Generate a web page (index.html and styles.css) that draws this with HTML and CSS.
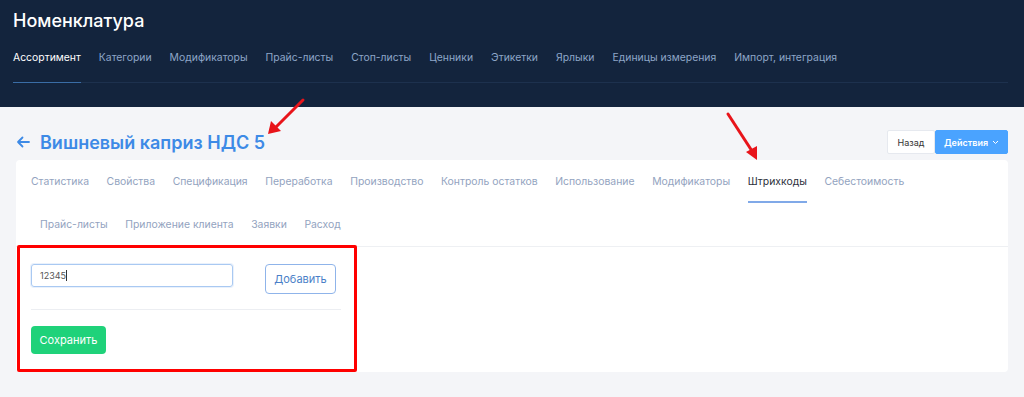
FILE: index.html
```html
<!DOCTYPE html>
<html lang="ru">
<head>
    <meta charset="UTF-8">
    <meta name="viewport" content="width=device-width, initial-scale=1.0">
    <title>Номенклатура</title>
    <link rel="stylesheet" href="styles.css">
</head>
<body>
    <header class="top">
        <h1 class="top-title">Номенклатура</h1>
        <nav class="top-nav">
            <a class="top-link active">Ассортимент</a>
            <a class="top-link">Категории</a>
            <a class="top-link">Модификаторы</a>
            <a class="top-link">Прайс-листы</a>
            <a class="top-link">Стоп-листы</a>
            <a class="top-link">Ценники</a>
            <a class="top-link">Этикетки</a>
            <a class="top-link">Ярлыки</a>
            <a class="top-link">Единицы измерения</a>
            <a class="top-link">Импорт, интеграция</a>
        </nav>
    </header>

    <main class="page">
        <div class="page-head">
            <h2 class="item-title">
                <svg class="back" width="14" height="12" viewBox="0 0 14 12">
                    <path d="M13 6H2M6.5 1.5L2 6l4.5 4.5" fill="none" stroke="#3d8ae6" stroke-width="1.8" stroke-linecap="round" stroke-linejoin="round"/>
                </svg>
                Вишневый каприз НДС 5
            </h2>
            <div class="head-actions">
                <button class="btn-back">Назад</button>
                <button class="btn-actions">Действия
                    <svg width="7" height="5" viewBox="0 0 7 5"><path d="M1 1l2.5 2.5L6 1" fill="none" stroke="#fff" stroke-width="1"/></svg>
                </button>
            </div>
        </div>

        <section class="card">
            <div class="tabs">
                <div class="tab-row">
                    <a class="tab">Статистика</a>
                    <a class="tab">Свойства</a>
                    <a class="tab">Спецификация</a>
                    <a class="tab">Переработка</a>
                    <a class="tab">Производство</a>
                    <a class="tab">Контроль остатков</a>
                    <a class="tab">Использование</a>
                    <a class="tab">Модификаторы</a>
                    <a class="tab active">Штрихкоды</a>
                    <a class="tab">Себестоимость</a>
                </div>
                <div class="tab-row second">
                    <a class="tab">Прайс-листы</a>
                    <a class="tab">Приложение клиента</a>
                    <a class="tab">Заявки</a>
                    <a class="tab">Расход</a>
                </div>
            </div>

            <div class="tab-body">
                <div class="barcode-row">
                    <div class="code-input">12345<span class="caret"></span></div>
                    <button class="btn-add">Добавить</button>
                </div>
                <div class="divider"></div>
                <button class="btn-save">Сохранить</button>
            </div>

            <div class="highlight"></div>
        </section>
    </main>

    <svg class="arrows" width="1024" height="397" viewBox="0 0 1024 397">
        <line x1="303" y1="100" x2="276" y2="127" stroke="#e8141a" stroke-width="3" stroke-linecap="round"/>
        <polygon points="268,134 271,121 281,131" fill="#e8141a"/>
        <line x1="728" y1="114" x2="752" y2="151" stroke="#e8141a" stroke-width="3" stroke-linecap="round"/>
        <polygon points="757,160 746,152 757,146" fill="#e8141a"/>
    </svg>
</body>
</html>
```

FILE: styles.css
```css
body {
    margin: 0;
    font-family: Inter, "Noto Sans", sans-serif;
    background-color: #f4f5f8;
    color: #333;
    position: relative;
}

.top {
    background-color: #13243d;
    height: 107px;
    padding: 0 16px 0 13px;
    box-sizing: border-box;
}
.top-title {
    margin: 0;
    padding-top: 9px;
    font-size: 18px;
    font-weight: 500;
    color: #fff;
    line-height: 24px;
}
.top-nav {
    display: flex;
    gap: 18px;
    margin-top: 10px;
    border-bottom: 1px solid #1d314e;
}
.top-link {
    font-size: 10.4px;
    color: #8ea6c8;
    line-height: 14px;
    padding: 8px 0 17px;
    border-bottom: 1px solid transparent;
    margin-bottom: -1px;
}
.top-link.active {
    color: #fff;
    border-bottom-color: #3a6da6;
}

.page {
    padding: 0 16px;
    position: relative;
}
.page-head {
    display: flex;
    justify-content: space-between;
    align-items: center;
    height: 53px;
}
.item-title {
    margin: 0;
    display: flex;
    align-items: center;
    gap: 10px;
    font-size: 18px;
    font-weight: 600;
    color: #3d8ae6;
    padding-top: 17px;
}
.head-actions {
    display: flex;
    padding-top: 17px;
}
.head-actions button {
    font-family: inherit;
    font-size: 9px;
    height: 24px;
    border-radius: 2px;
    cursor: pointer;
}
.btn-back {
    background: #fff;
    border: 1px solid #e6e9ef;
    color: #333;
    width: 48px;
    border-radius: 2px 0 0 2px;
}
.btn-actions {
    background: #4aa3ff;
    border: 1px solid #4aa3ff;
    color: #fff;
    font-weight: 600;
    width: 73px;
    display: flex;
    align-items: center;
    justify-content: center;
    gap: 4px;
}

.card {
    background: #fff;
    border-radius: 4px;
    position: relative;
}
.tab-row {
    display: flex;
    gap: 17.6px;
    padding-left: 15px;
}
.tab-row.second {
    padding-left: 24px;
}
.tab {
    font-size: 10.4px;
    color: #93a3c0;
    line-height: 14px;
    height: 14px;
    padding: 15px 0 12px;
    border-bottom: 2px solid transparent;
}
.tab.active {
    color: #2b2f3a;
    border-bottom-color: #80a9e8;
}

.tab-body {
    border-top: 1px solid #eef0f3;
    padding: 17px 15px 18px;
}
.barcode-row {
    display: flex;
    align-items: flex-start;
    gap: 32px;
}
.code-input {
    width: 192px;
    height: 21px;
    border: 1px solid #a9c9f2;
    border-radius: 3px;
    padding: 0 0 0 8px;
    font-size: 9px;
    color: #555;
    display: flex;
    align-items: center;
    box-shadow: 0 0 0 1px rgba(169, 201, 242, 0.25);
}
.caret {
    display: inline-block;
    width: 1px;
    height: 11px;
    background: #333;
}
.btn-add {
    font-family: inherit;
    background: #fff;
    border: 1px solid #8fb4ea;
    border-radius: 4px;
    color: #4a7fc8;
    font-size: 11px;
    width: 71px;
    height: 30px;
    cursor: pointer;
}
.divider {
    width: 310px;
    height: 1px;
    background: #eceef2;
    margin: 15px 0 16px;
}
.btn-save {
    font-family: inherit;
    background: #1fd27a;
    border: none;
    border-radius: 4px;
    color: #fff;
    font-size: 11px;
    width: 75px;
    height: 28px;
    cursor: pointer;
}

.highlight {
    position: absolute;
    left: 1px;
    top: 85px;
    width: 334px;
    height: 121px;
    border: 3px solid #ff0000;
    border-radius: 2px;
}
.arrows {
    position: absolute;
    left: 0;
    top: 0;
    pointer-events: none;
}
```
